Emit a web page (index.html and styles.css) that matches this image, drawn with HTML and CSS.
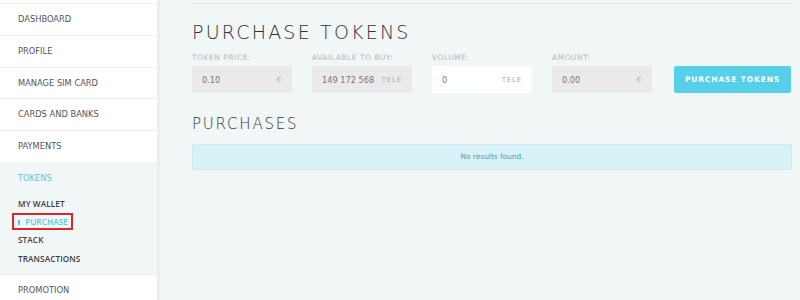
FILE: index.html
```html
<!DOCTYPE html>
<html lang="en">
<head>
  <meta charset="UTF-8" />
  <title>Purchase Tokens</title>
  <link rel="stylesheet" href="styles.css">
</head>
<body>
  <aside class="sidebar">
    <ul class="menu">
      <li class="menu-item">DASHBOARD</li>
      <li class="menu-item">PROFILE</li>
      <li class="menu-item">MANAGE SIM CARD</li>
      <li class="menu-item">CARDS AND BANKS</li>
      <li class="menu-item">PAYMENTS</li>
      <li class="menu-group">
        <div class="menu-item active">TOKENS</div>
        <ul class="submenu">
          <li>MY WALLET</li>
          <li class="current"><span class="mark"></span>PURCHASE</li>
          <li>STACK</li>
          <li>TRANSACTIONS</li>
        </ul>
      </li>
      <li class="menu-item">PROMOTION</li>
    </ul>
  </aside>

  <main class="content">
    <h1>PURCHASE TOKENS</h1>
    <div class="form-row">
      <div class="field">
        <label>TOKEN PRICE:</label>
        <div class="input readonly"><span>0.10</span><em>€</em></div>
      </div>
      <div class="field">
        <label>AVAILABLE TO BUY:</label>
        <div class="input readonly"><span>149 172 568</span><em>TELE</em></div>
      </div>
      <div class="field">
        <label>VOLUME:</label>
        <div class="input"><span>0</span><em>TELE</em></div>
      </div>
      <div class="field">
        <label>AMOUNT:</label>
        <div class="input readonly"><span>0.00</span><em>€</em></div>
      </div>
      <button class="btn">PURCHASE TOKENS</button>
    </div>

    <h2>PURCHASES</h2>
    <div class="empty">No results found.</div>
  </main>
</body>
</html>
```

FILE: styles.css
```css
body {
  margin: 0;
  display: flex;
  min-height: 300px;
  background: #f1f6f7;
  font-family: "DejaVu Sans", sans-serif;
  color: #555;
}
.sidebar {
  width: 157px;
  flex-shrink: 0;
  background: #fff;
  border-right: 3px solid #e9eff1;
}
.menu {
  list-style: none;
  margin: 0;
  padding: 3px 0 0;
}
.menu-item {
  border-top: 1px solid #edf1f2;
  height: 30.8px;
  line-height: 30.8px;
  padding-left: 18px;
  font-size: 8.3px;
  color: #555;
}
.menu-group {
  background: #f1f6f7;
  padding-bottom: 6px;
}
.menu-group .menu-item {
  border-top-color: #f1f6f7;
}
.menu-item.active {
  color: #5bc7e0;
}
.submenu {
  list-style: none;
  margin: 0;
  padding: 1px 0 0;
}
.submenu li {
  position: relative;
  height: 18.3px;
  line-height: 18.3px;
  padding-left: 18px;
  font-family: "Open Sans", sans-serif;
  font-size: 8.2px;
  font-weight: 600;
  letter-spacing: 0.1px;
  color: #3d3d3d;
}
.submenu li.current {
  color: #5bc7e0;
  padding-left: 25px;
}
.submenu li.current::after {
  content: "";
  position: absolute;
  left: 12px;
  top: 0;
  width: 57px;
  height: 13px;
  border: 2px solid #e3242b;
}
.mark {
  position: absolute;
  left: 18px;
  top: 7px;
  width: 1.5px;
  height: 5px;
  background: #5bc7e0;
}
.content {
  flex: 1;
  margin: 3px 8px 0 32px;
  border-top: 1px solid #e1e8ea;
}
h1, h2 {
  margin: 0;
  font-weight: 300;
  font-size: 19px;
  letter-spacing: 2.2px;
  color: #333;
}
h1 {
  padding-top: 17px;
  line-height: 22px;
}
h2 {
  font-size: 15px;
  letter-spacing: 1.8px;
  margin-top: 21px;
  line-height: 20px;
}
.form-row {
  display: flex;
  align-items: flex-end;
  gap: 20px;
  margin-top: 10px;
}
.field {
  width: 100px;
}
.field label {
  display: block;
  font-size: 7.4px;
  letter-spacing: 0.6px;
  color: #b5b9ba;
  margin-bottom: 4px;
}
.input {
  display: flex;
  justify-content: space-between;
  align-items: center;
  height: 27px;
  padding: 0 10px;
  background: #fff;
  font-size: 8.2px;
  color: #777;
}
.input.readonly {
  background: #eaeaea;
}
.input em {
  font-style: normal;
  font-size: 7px;
  letter-spacing: 0.8px;
  color: #aaa;
}
.btn {
  margin-left: 2px;
  width: 117px;
  height: 27px;
  border: none;
  border-radius: 2px;
  background: #56d0e9;
  color: #fff;
  font-family: inherit;
  font-size: 7.6px;
  font-weight: bold;
  letter-spacing: 0.8px;
}
.empty {
  margin-top: 10px;
  height: 24px;
  line-height: 24px;
  background: #d9f2f8;
  border: 1px solid #c9ebf3;
  border-radius: 2px;
  text-align: center;
  font-size: 7.4px;
  color: #4a9ab5;
}
```
